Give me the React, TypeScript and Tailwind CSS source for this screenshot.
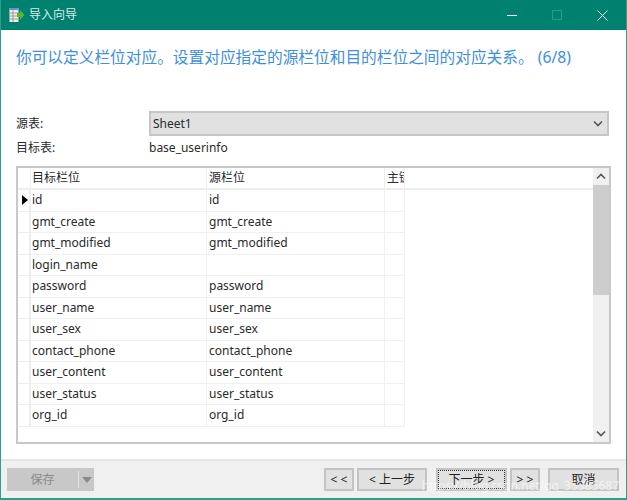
const ROWS = [
  ["id", "id"],
  ["gmt_create", "gmt_create"],
  ["gmt_modified", "gmt_modified"],
  ["login_name", ""],
  ["password", "password"],
  ["user_name", "user_name"],
  ["user_sex", "user_sex"],
  ["contact_phone", "contact_phone"],
  ["user_content", "user_content"],
  ["user_status", "user_status"],
  ["org_id", "org_id"],
]

function Chevron({ up = false }: { up?: boolean }) {
  return (
    <svg width="10" height="7" viewBox="0 0 10 7" className="text-[#555]">
      <path
        d={up ? "M1 5.5 L5 1.5 L9 5.5" : "M1 1.5 L5 5.5 L9 1.5"}
        fill="none"
        stroke="currentColor"
        strokeWidth="1.6"
      />
    </svg>
  )
}

function WizardIcon() {
  return (
    <svg width="16" height="16" viewBox="0 0 16 16">
      <rect x="0.5" y="1" width="9" height="14" fill="#f2f2ea" />
      <rect x="0.5" y="1" width="9" height="2" fill="#6f8fd0" />
      <path d="M0.5 6H9.5M0.5 9H9.5M0.5 12H9.5M4 3V15" stroke="#9a9a92" strokeWidth="1" />
      <path d="M8 6H11V3L15.5 8L11 13V10H8Z" fill="#5cb531" />
    </svg>
  )
}

function NavButton({ label, className = "" }: { label: string; className?: string }) {
  return (
    <div
      className={`flex h-[23px] items-center justify-center border-2 border-[#c4c4c4] bg-[#e1e1e1] text-[12px] text-[#222] ${className}`}
    >
      {label}
    </div>
  )
}

export default function App() {
  return (
    <div className="flex h-[500px] w-[627px] flex-col overflow-hidden border-x border-b-2 border-[#2f9c8c] bg-white font-['Noto_Sans','Noto_Sans_CJK_SC',sans-serif] text-[12px] text-[#2a2a2a]">
      <div className="flex h-[30px] shrink-0 items-center bg-[#00806e] pl-[8px] pr-[5px] text-white">
        <WizardIcon />
        <span className="ml-[4px] text-[12px] text-[#d5ece8]">导入向导</span>
        <div className="ml-auto flex items-center gap-[35px] pr-[1px]">
          <div className="h-px w-[10px] bg-white" />
          <div className="h-[10px] w-[10px] border border-[#2a9a8a]" />
          <svg width="11" height="11" viewBox="0 0 11 11" className="mr-[12px]">
            <path d="M0.5 0.5L10.5 10.5M10.5 0.5L0.5 10.5" stroke="#e6f3f1" strokeWidth="1" />
          </svg>
        </div>
      </div>

      <div className="flex min-h-0 flex-1 flex-col px-[15px]">
        <p className="mt-[15px] h-[24px] text-[15.7px] leading-[24px] whitespace-nowrap text-[#3d8fe0]">
          你可以定义栏位对应。设置对应指定的源栏位和目的栏位之间的对应关系。 (6/8)
        </p>

        <div className="mt-[42px] flex h-[25px] items-center">
          <span className="w-[133px]">源表:</span>
          <div className="mr-[2px] flex h-[25px] flex-1 items-center justify-between border-2 border-[#c6c6c6] bg-[#e1e1e1] pl-[2px] pr-[4px] text-[12px]">
            Sheet1
            <Chevron />
          </div>
        </div>
        <div className="mt-[2px] flex h-[20px] items-center">
          <span className="w-[133px]">目标表:</span>
          <span>base_userinfo</span>
        </div>

        <div className="mt-[8px] flex h-[278px] border-2 border-[#c8c8c8] bg-white">
          <div className="min-w-0 flex-1">
            <div className="flex h-[22px] border-b-2 border-[#eeeeee]">
              <div className="w-[13px] border-r border-[#eeeeee]" />
              <div className="flex w-[176px] items-center border-r border-[#eeeeee] pl-[1px]">目标栏位</div>
              <div className="flex w-[178px] items-center border-r border-[#eeeeee] pl-[2px]">源栏位</div>
              <div className="flex w-[20px] items-center overflow-hidden border-r border-[#eeeeee] pl-[2px] whitespace-nowrap">
                主键
              </div>
            </div>
            {ROWS.map(([target, source], i) => (
              <div key={target} className="flex h-[21.5px]">
                <div className="flex w-[13px] items-center border-r-2 border-b border-[#eeeeee] pl-[4px]">
                  {i === 0 && <div className="h-0 w-0 border-y-[5px] border-l-[6px] border-y-transparent border-l-black" />}
                </div>
                <div className="flex w-[176px] items-center border-r border-b border-[#f0f0f0] pl-[1px]">{target}</div>
                <div className="flex w-[178px] items-center border-r border-b border-[#f0f0f0] pl-[2px]">{source}</div>
                <div className="w-[20px] border-r border-b border-[#f0f0f0]" />
              </div>
            ))}
          </div>
          <div className="flex w-[16px] shrink-0 flex-col bg-[#f0f0f0]">
            <div className="flex h-[17px] items-center justify-center">
              <Chevron up />
            </div>
            <div className="h-[110px] bg-[#cdcdcd]" />
            <div className="mt-auto flex h-[17px] items-center justify-center">
              <Chevron />
            </div>
          </div>
        </div>
      </div>

      <div className="relative flex h-[39px] shrink-0 items-center border-t-2 border-[#e6e6e6] bg-[#f0f0f0] pl-[6px] pr-[7px]">
        <div className="flex h-[23px] w-[87px] items-center bg-[#c8c8c8] text-[#8a8a8a]">
          <span className="w-[71px] text-center">保存</span>
          <div className="h-[17px] w-px bg-[#e0e0e0]" />
          <div className="ml-[3px] h-0 w-0 border-x-[5px] border-t-[6px] border-x-transparent border-t-[#8a8a8a]" />
        </div>
        <NavButton label="< <" className="ml-auto w-[30px]" />
        <NavButton label="< 上一步" className="ml-[3px] w-[70px]" />
        <NavButton label="下一步 >" className="ml-[9px] w-[71px] border-[#1a7fd6] outline-1 -outline-offset-3 outline-dotted outline-[#333]" />
        <NavButton label="> >" className="ml-[3px] w-[30px]" />
        <NavButton label="取消" className="ml-[8px] w-[71px]" />
        <span className="absolute right-[7px] bottom-[5px] text-[12px] leading-[14px] whitespace-nowrap text-white/60">
          https://blog.csdn.net/qq_35385687
        </span>
      </div>
    </div>
  )
}
